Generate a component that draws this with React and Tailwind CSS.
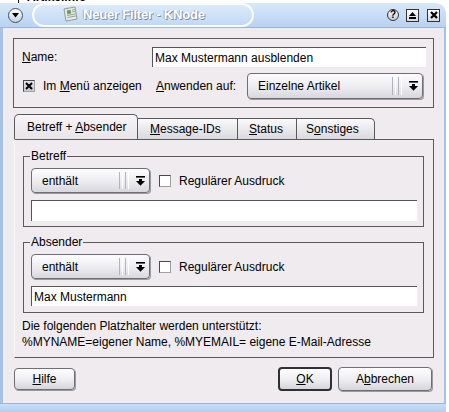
import React from "react";

const ComboArrow = () => (
  <svg width="9" height="10" viewBox="0 0 9 10">
    <rect x="0" y="0" width="9" height="1.6" fill="#000" />
    <rect x="3" y="3" width="3" height="2.5" fill="#000" />
    <polygon points="0,5 9,5 4.5,9.8" fill="#000" />
  </svg>
);

function Combo({ text, w, h }) {
  return (
    <div
      className={`${w} ${h} flex items-center rounded-[4px] border border-[#6e6e74] bg-gradient-to-b from-[#fdfdfe] via-[#eeeef2] to-[#d7d7de] shadow-[1px_1px_0_#9a9aa0]`}
    >
      <span className="flex-1 pl-[10px] leading-none">{text}</span>
      <div className="flex h-[78%] gap-[2px] mr-[6px]">
        <div className="w-[1px] bg-[#b4b4bc]" />
        <div className="w-[1px] bg-white" />
        <div className="w-[1px] bg-[#b4b4bc]" />
        <div className="w-[1px] bg-white" />
      </div>
      <div className="w-[14px] flex justify-center pr-[4px]">
        <ComboArrow />
      </div>
    </div>
  );
}

function Check({ checked }) {
  return (
    <div
      className={`w-[12px] h-[12px] border border-t-[#4a4a4a] border-l-[#4a4a4a] border-b-[#a0a0a0] border-r-[#a0a0a0] flex items-center justify-center ${checked ? "bg-gradient-to-b from-[#e6e6ea] to-[#c8c8d0]" : "bg-white"}`}
    >
      {checked && (
        <svg width="8" height="8" viewBox="0 0 8 8">
          <path d="M1 1 L7 7 M7 1 L1 7" stroke="#000" strokeWidth="2" />
        </svg>
      )}
    </div>
  );
}

function Input({ w, h, value }) {
  return (
    <div
      className={`${w} ${h} bg-white border-t border-l border-t-[#555] border-l-[#555] flex items-center pl-[2px] leading-none`}
    >
      {value}
    </div>
  );
}

function Btn({ children, w, h, focus }) {
  return (
    <div
      className={`${w} ${h} flex items-center justify-center rounded-[4px] bg-gradient-to-b from-[#fdfdfe] via-[#efeff3] to-[#d5d5dc] ${focus ? "border-2 border-[#303034]" : "border border-[#6e6e74] shadow-[1px_1px_0_#9a9aa0]"}`}
    >
      <span>{children}</span>
    </div>
  );
}

function Group({ label, children, className }) {
  return (
    <div className={`relative border border-[#5a5a5a] ${className}`}>
      <span className="absolute -top-[8px] left-[6px] px-[1px] bg-[#efebef] leading-[14px]">
        {label}
      </span>
      {children}
    </div>
  );
}

export default function App() {
  return (
    <div className="w-[449px] h-[412px] bg-white overflow-hidden flex flex-col font-['Liberation_Sans',Arial,sans-serif] text-[12px] text-black">
      <div className="h-[3px] overflow-hidden pl-[18px] flex items-end gap-[8px] bg-white">
        <div className="w-[1px] h-[3px] bg-black" />
        <span className="font-bold text-[12px] leading-none">Artikelinfo</span>
      </div>
      <div className="flex-1 flex flex-col mr-[3px]">
        {/* title bar */}
        <div className="h-[25px] rounded-tr-[10px] bg-gradient-to-b from-[#d9e8fa] via-[#c8ddf6] to-[#b9d2f1] flex items-center border-b border-[#9db6d8]">
          <div className="ml-[8px] w-[15px] h-[15px] rounded-full border border-[#44505e] bg-gradient-to-b from-white to-[#c9d2de] flex items-center justify-center">
            <svg width="7" height="5" viewBox="0 0 7 5">
              <polygon points="0,0 7,0 3.5,4.5" fill="#000" />
            </svg>
          </div>
          <div className="ml-[9px] w-[222px] h-[24px] -mt-[1px] rounded-full border-2 border-white/90 bg-gradient-to-b from-[#dceafb] to-[#c2d9f4] flex items-center">
            <svg width="17" height="17" viewBox="0 0 17 17" className="ml-[28px]">
              <path d="M2 3 L13 1 L15 13 L4 15 Z" fill="#e8ece4" stroke="#7a8a7a" strokeWidth="0.8" />
              <rect x="5" y="4" width="4" height="4" fill="#6f9a5e" transform="rotate(-10 7 6)" />
              <path d="M10 4 L13 3.5 M10 6 L13.2 5.5 M5 9.5 L13.5 8 M5.3 11.5 L13.8 10" stroke="#8a9a8a" strokeWidth="0.9" />
            </svg>
            <span className="ml-[4px] font-bold text-[13px] text-white tracking-[-0.2px] [text-shadow:1px_1px_0_#7f8ea3,-1px_0_0_#9fb0c6]">
              Neuer Filter - KNode
            </span>
          </div>
          <div className="flex-1" />
          <div className="w-[12px] h-[12px] rounded-full border border-[#333] bg-gradient-to-b from-white to-[#c5ccd6] flex items-center justify-center text-[10px] font-bold leading-none">
            ?
          </div>
          <div className="ml-[7px] w-[13px] h-[13px] border border-[#333] bg-gradient-to-b from-white to-[#d4dae3] flex flex-col items-center justify-center gap-[1px]">
            <svg width="7" height="4" viewBox="0 0 7 4">
              <polygon points="0,4 7,4 3.5,0" fill="#000" />
            </svg>
            <div className="w-[7px] h-[2px] bg-black" />
          </div>
          <div className="ml-[8px] mr-[6px] w-[13px] h-[13px] border border-[#333] bg-gradient-to-b from-white to-[#d4dae3] flex items-center justify-center">
            <svg width="8" height="8" viewBox="0 0 8 8">
              <path d="M1 1 L7 7 M7 1 L1 7" stroke="#000" strokeWidth="2.2" />
            </svg>
          </div>
        </div>

        {/* body */}
        <div className="h-[375px] bg-[#efebef] border-l-[3px] border-l-[#a8c2e4] border-r-2 border-r-[#a8c2e4] flex flex-col">
          {/* top group */}
          <div className="mt-[10px] ml-[10px] w-[421px] h-[70px] border border-[#5a5a5a] flex flex-col">
            <div className="mt-[8px] flex items-center">
              <span className="pl-[8px] w-[138px]">
                <u>N</u>ame:
              </span>
              <Input w="w-[274px]" h="h-[20px]" value="Max Mustermann ausblenden" />
            </div>
            <div className="mt-[6px] flex items-center">
              <div className="ml-[9px]">
                <Check checked />
              </div>
              <span className="ml-[8px] w-[113px]">
                Im <u>M</u>enü anzeigen
              </span>
              <span className="w-[91px]">
                <u>A</u>nwenden auf:
              </span>
              <Combo text="Einzelne Artikel" w="w-[176px]" h="h-[26px]" />
            </div>
          </div>

          {/* tabs */}
          <div className="mt-[6px] ml-[11px] h-[25px] flex items-end">
            <div className="w-[124px] h-[25px] rounded-t-[5px] border border-b-0 border-[#5a5a5a] bg-gradient-to-b from-[#f7f5f7] to-[#e8e4e8] flex items-center pl-[12px] pb-[1px]">
              <span>
                Betreff + <u>A</u>bsender
              </span>
            </div>
            <div className="h-[21px] flex border-t border-[#5a5a5a] bg-gradient-to-b from-[#fafafc] to-[#d9d9e0] rounded-tr-[5px] border-r">
              <div className="w-[99px] flex items-center pl-[12px]">
                <span>
                  <u>M</u>essage-IDs
                </span>
              </div>
              <div className="w-[59px] border-l border-[#5a5a5a] flex items-center pl-[11px]">
                <span>
                  <u>S</u>tatus
                </span>
              </div>
              <div className="w-[78px] border-l border-[#5a5a5a] flex items-center pl-[9px]">
                <span>
                  S<u>o</u>nstiges
                </span>
              </div>
            </div>
          </div>

          {/* panel */}
          <div className="ml-[11px] w-[420px] h-[219px] border-t border-r border-b border-[#5a5a5a] border-l border-l-[#f8f8f8] flex flex-col">
            <Group label="Betreff" className="ml-[8px] mt-[16px] w-[401px] h-[71px]">
              <div className="ml-[7px] mt-[11px] flex items-center">
                <Combo text="enthält" w="w-[119px]" h="h-[25px]" />
                <div className="ml-[9px]">
                  <Check />
                </div>
                <span className="ml-[8px]">Regulärer Ausdruck</span>
              </div>
              <div className="ml-[7px] mt-[7px]">
                <Input w="w-[386px]" h="h-[21px]" value="" />
              </div>
            </Group>
            <Group label="Absender" className="ml-[8px] mt-[15px] w-[401px] h-[71px]">
              <div className="ml-[7px] mt-[11px] flex items-center">
                <Combo text="enthält" w="w-[119px]" h="h-[25px]" />
                <div className="ml-[9px]">
                  <Check />
                </div>
                <span className="ml-[8px]">Regulärer Ausdruck</span>
              </div>
              <div className="ml-[7px] mt-[7px]">
                <Input w="w-[386px]" h="h-[20px]" value="Max Mustermann" />
              </div>
            </Group>
            <div className="mt-[5px] pl-[7px] leading-[16px]">
              <div>Die folgenden Platzhalter werden unterstützt:</div>
              <div>%MYNAME=eigener Name, %MYEMAIL= eigene E-Mail-Adresse</div>
            </div>
          </div>

          {/* buttons */}
          <div className="mt-[9px] ml-[11px] flex items-center">
            <Btn w="w-[61px]" h="h-[22px]">
              <u>H</u>ilfe
            </Btn>
            <div className="flex-1" />
            <Btn w="w-[54px]" h="h-[24px]" focus>
              <u>O</u>K
            </Btn>
            <div className="ml-[6px] mr-[12px]">
              <Btn w="w-[94px]" h="h-[24px]">
                A<u>b</u>brechen
              </Btn>
            </div>
          </div>
        </div>
        <div className="flex-1 bg-gradient-to-b from-[#c9ddf6] to-[#b5cff0] border-t border-[#9db6d8]" />
      </div>
    </div>
  );
}
